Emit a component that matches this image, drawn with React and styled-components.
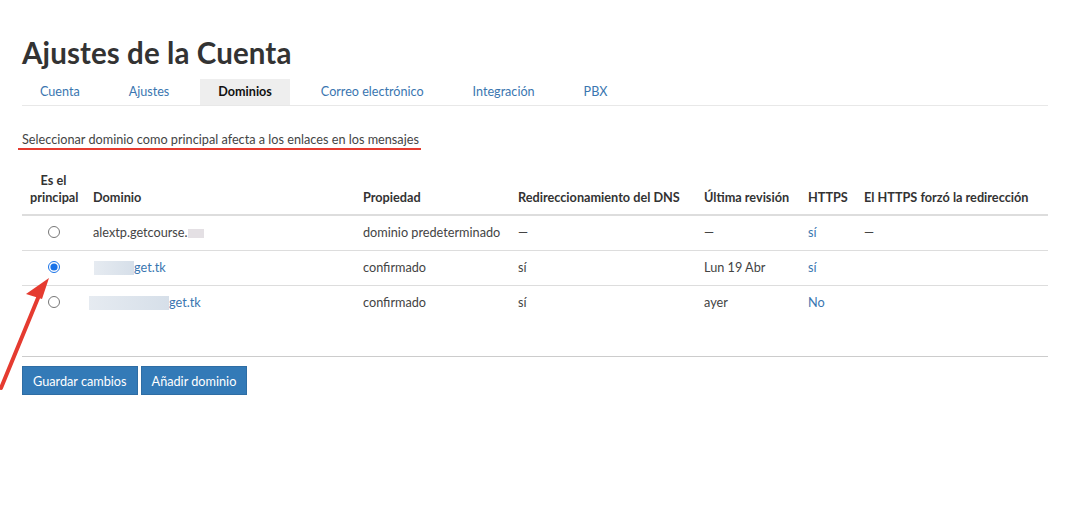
import styled, { createGlobalStyle } from "styled-components"

const GlobalStyle = createGlobalStyle`
    html, body {
        margin: 0;
        padding: 0;
        background: #fff;
        font-family: Lato, "Liberation Sans", sans-serif;
        color: #333;
    }
`

const tabs = ["Cuenta", "Ajustes", "Dominios", "Correo electrónico", "Integración", "PBX"]

const columns = [
    { title: "Es el principal", width: 63, center: true },
    { title: "Dominio", width: 270 },
    { title: "Propiedad", width: 155 },
    { title: "Redireccionamiento del DNS", width: 186 },
    { title: "Última revisión", width: 104 },
    { title: "HTTPS", width: 56 },
    { title: "El HTTPS forzó la redirección", width: 192 },
]

const rows = [
    { checked: false, prefix: 0, mask: 16, name: "alextp.getcourse.", link: false, prop: "dominio predeterminado", dns: "—", last: "—", https: "sí", forced: "—" },
    { checked: true, prefix: 1, mask: 40, name: "get.tk", link: true, prop: "confirmado", dns: "sí", last: "Lun 19 Abr", https: "sí", forced: "" },
    { checked: false, prefix: -4, mask: 80, name: "get.tk", link: true, prop: "confirmado", dns: "sí", last: "ayer", https: "No", forced: "" },
]

const App = () => {
    return (
        <>
            <GlobalStyle />
            <Page>
                <Title>Ajustes de la Cuenta</Title>
                <Tabs>
                    {tabs.map((t) => (
                        <Tab key={t} active={t === "Dominios"}>{t}</Tab>
                    ))}
                </Tabs>

                <Note>
                    <Underlined>Seleccionar dominio como principal afecta a los enlaces en los mensajes</Underlined>
                </Note>

                <Table>
                    <colgroup>
                        {columns.map((c) => (
                            <col key={c.title} style={{ width: c.width }} />
                        ))}
                    </colgroup>
                    <thead>
                        <tr>
                            {columns.map((c) => (
                                <Th key={c.title} center={c.center}>
                                    {c.center ? <>Es el<br />principal</> : c.title}
                                </Th>
                            ))}
                        </tr>
                    </thead>
                    <tbody>
                        {rows.map((r, i) => (
                            <tr key={i}>
                                <Td center>
                                    <Radio checked={r.checked} />
                                </Td>
                                <Td>
                                    {r.link ? (
                                        <DomainLink>
                                            <Mask shift={r.prefix} w={r.mask} />
                                            {r.name}
                                        </DomainLink>
                                    ) : (
                                        <span>
                                            {r.name}
                                            <Mask shift={0} w={r.mask} pale />
                                        </span>
                                    )}
                                </Td>
                                <Td>{r.prop}</Td>
                                <Td>{r.dns}</Td>
                                <Td>{r.last}</Td>
                                <Td blue>{r.https}</Td>
                                <Td>{r.forced}</Td>
                            </tr>
                        ))}
                    </tbody>
                </Table>

                <Footer>
                    <Button>Guardar cambios</Button>
                    <Button>Añadir dominio</Button>
                </Footer>

                <Arrow width="60" height="120" viewBox="0 0 60 120">
                    <line x1="1" y1="112" x2="38" y2="22" stroke="#e53b30" strokeWidth="4" strokeLinecap="round" />
                    <polygon points="49,2 26,18 42,23" fill="#e53b30" />
                </Arrow>
            </Page>
        </>
    )
}

const Page = styled.div`
    position: relative;
    width: 1026px;
    padding: 37px 0 40px 22px;
`

const Title = styled.h1`
    margin: 0 0 10px;
    font-size: 29.5px;
    font-weight: 700;
    line-height: 32px;
    color: #333;
    letter-spacing: 0.1px;
`

const Tabs = styled.div`
    display: flex;
    gap: 13px;
    border-bottom: 1px solid #e8e8e8;
`

const Tab = styled.div`
    padding: 0 18px;
    height: 26px;
    line-height: 25px;
    font-size: 12.6px;
    color: ${(p) => (p.active ? "#111" : "#3a76b0")};
    font-weight: ${(p) => (p.active ? 700 : 400)};
    background: ${(p) => (p.active ? "#eeeeee" : "transparent")};
`

const Note = styled.div`
    margin-top: 25px;
    font-size: 12.7px;
    color: #444;
    line-height: 16px;
`

const Underlined = styled.span`
    display: inline-block;
    margin-left: -4px;
    padding: 0 2px 1px 0;
    text-indent: 4px;
    border-bottom: 2px solid #e53b30;
`

const Table = styled.table`
    margin-top: 22px;
    width: 1026px;
    border-collapse: collapse;
    table-layout: fixed;
    font-size: 12.7px;
`

const Th = styled.th`
    padding: 0 8px 8px;
    text-align: ${(p) => (p.center ? "center" : "left")};
    vertical-align: bottom;
    font-weight: 700;
    color: #333;
    line-height: 17px;
    border-bottom: 2px solid #ddd;
    white-space: nowrap;
`

const Td = styled.td`
    height: 32px;
    padding: 0 8px 2px;
    text-align: ${(p) => (p.center ? "center" : "left")};
    vertical-align: middle;
    color: ${(p) => (p.blue ? "#3a76b0" : "#444")};
    border-top: 1px solid #ddd;
    white-space: nowrap;
    tr:first-child > & {
        border-top: none;
    }
`

const Radio = styled.input.attrs({ type: "radio", readOnly: true })`
    width: 12px;
    height: 12px;
    margin: 3px 0 0;
    accent-color: #1a73e8;
`

const DomainLink = styled.span`
    color: #3a76b0;
`

const Mask = styled.span`
    display: inline-block;
    vertical-align: -3px;
    width: ${(p) => p.w}px;
    height: ${(p) => (p.pale ? 9 : 14)}px;
    margin-left: ${(p) => p.shift}px;
    background: ${(p) => (p.pale ? "#e4e0e4" : "linear-gradient(90deg, #e6ebf1, #d6dfe9)")};
    ${(p) => (p.pale ? "vertical-align: -1px;" : "")}
`

const Footer = styled.div`
    margin-top: 36px;
    padding-top: 9px;
    border-top: 1px solid #ccc;
    display: flex;
    gap: 3px;
`

const Button = styled.button`
    height: 29px;
    padding: 0 10px;
    background: #337ab7;
    border: 1px solid #2e6da4;
    color: #fff;
    font-family: inherit;
    font-size: 12.7px;
`

const Arrow = styled.svg`
    position: absolute;
    left: 0;
    top: 276px;
    pointer-events: none;
`

export default App
